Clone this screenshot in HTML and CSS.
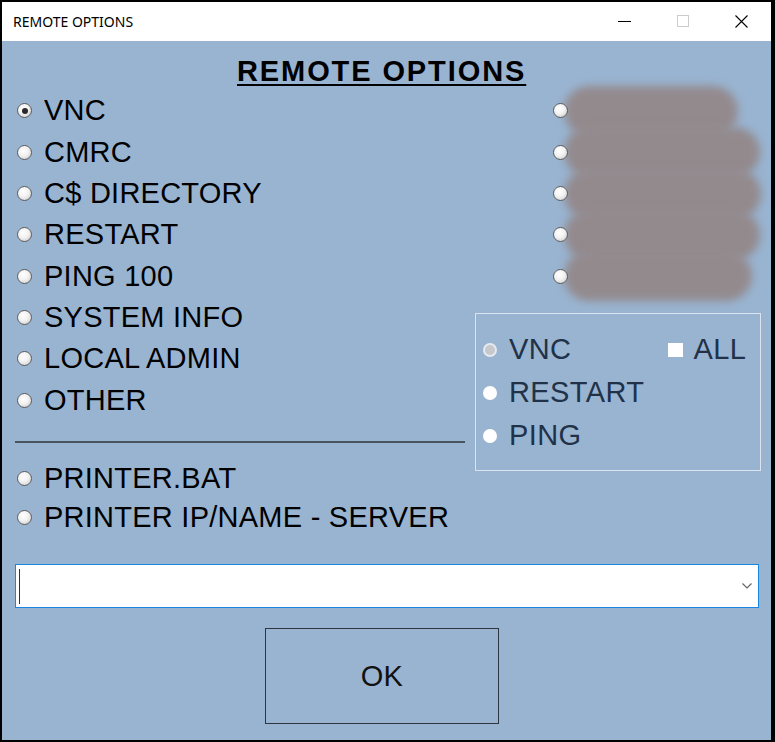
FILE: index.html
```html
<!DOCTYPE html>
<html>
<head>
<meta charset="utf-8">
<link rel="stylesheet" href="styles.css">
</head>
<body>
<div class="window">
  <div class="titlebar">
    <span class="title">REMOTE OPTIONS</span>
    <div class="caption">
      <span class="cbtn"><svg width="13" height="13" viewBox="0 0 13 13"><line x1="0" y1="6.5" x2="13" y2="6.5" stroke="#000" stroke-width="1"/></svg></span>
      <span class="cbtn"><svg width="13" height="13" viewBox="0 0 13 13"><rect x="0.5" y="0.5" width="11" height="11" fill="none" stroke="#cccccc" stroke-width="1"/></svg></span>
      <span class="cbtn"><svg width="13" height="13" viewBox="0 0 13 13"><path d="M0.5 0.5 L12.5 12.5 M12.5 0.5 L0.5 12.5" stroke="#000" stroke-width="1.1" fill="none"/></svg></span>
    </div>
  </div>
  <div class="client">
    <h1 class="heading">REMOTE OPTIONS</h1>
    <div class="main">
      <div class="left">
        <div class="opts">
          <label class="row"><span class="radio checked"></span><span class="txt">VNC</span></label>
          <label class="row"><span class="radio"></span><span class="txt">CMRC</span></label>
          <label class="row"><span class="radio"></span><span class="txt">C$ DIRECTORY</span></label>
          <label class="row"><span class="radio"></span><span class="txt">RESTART</span></label>
          <label class="row"><span class="radio"></span><span class="txt">PING 100</span></label>
          <label class="row"><span class="radio"></span><span class="txt">SYSTEM INFO</span></label>
          <label class="row"><span class="radio"></span><span class="txt">LOCAL ADMIN</span></label>
          <label class="row"><span class="radio"></span><span class="txt">OTHER</span></label>
        </div>
        <div class="sep"></div>
        <div class="printers">
          <label class="row prow"><span class="radio"></span><span class="txt">PRINTER.BAT</span></label>
          <label class="row prow"><span class="radio"></span><span class="txt">PRINTER IP/NAME - SERVER</span></label>
        </div>
      </div>
      <div class="right">
        <div class="redacted">
          <div class="rrow"><span class="radio"></span><span class="blob b1"></span></div>
          <div class="rrow"><span class="radio"></span><span class="blob b2"></span></div>
          <div class="rrow"><span class="radio"></span><span class="blob b3"></span></div>
          <div class="rrow"><span class="radio"></span><span class="blob b4"></span></div>
          <div class="rrow"><span class="radio"></span><span class="blob b5"></span></div>
        </div>
        <div class="group">
          <div class="grow">
            <span class="gradio disabled"></span><span class="gtxt">VNC</span>
            <span class="check"></span><span class="gtxt">ALL</span>
          </div>
          <div class="grow"><span class="gradio"></span><span class="gtxt">RESTART</span></div>
          <div class="grow"><span class="gradio"></span><span class="gtxt">PING</span></div>
        </div>
      </div>
    </div>
    <div class="combo">
      <span class="caret"></span>
      <svg class="chev" width="10" height="6" viewBox="0 0 10 6"><path d="M0.5 0.5 L5 5 L9.5 0.5" stroke="#666" stroke-width="1.2" fill="none"/></svg>
    </div>
    <div class="okrow"><button class="ok">OK</button></div>
  </div>
</div>
</body>
</html>
```
FILE: styles.css
```css
html, body {
  margin: 0;
  padding: 0;
  background: #000;
}
body {
  width: 775px;
  height: 742px;
  overflow: hidden;
}
.window {
  margin: 2px 4px 0 2px;
  width: 769px;
  height: 738px;
  background: #99b4d1;
  display: flex;
  flex-direction: column;
}
.titlebar {
  height: 39px;
  background: #fff;
  display: flex;
  align-items: center;
  flex-shrink: 0;
}
.title {
  font-family: "Noto Sans", sans-serif;
  font-size: 14px;
  color: #000;
  margin-left: 11px;
  margin-top: -1px;
}
.caption {
  margin-left: auto;
  display: flex;
  height: 100%;
}
.cbtn {
  width: 58.5px;
  display: flex;
  align-items: center;
  justify-content: center;
}
.cbtn svg { display: block; }
.client {
  padding: 0 10px 0 13px;
  font-family: "Liberation Sans", Arial, sans-serif;
  color: #000;
}
.heading {
  margin: 16.5px 0 5.8px 0;
  height: 27px;
  font-size: 29px;
  line-height: 27px;
  font-weight: bold;
  letter-spacing: 1.9px;
  padding-left: 222px;
  text-decoration: underline;
  text-decoration-thickness: 2px;
  text-underline-offset: 3px;
  white-space: nowrap;
}
.main {
  display: grid;
  grid-template-columns: 450px 286px;
  column-gap: 10px;
}
.row {
  display: flex;
  align-items: center;
  height: 41.3px;
  font-size: 29px;
  letter-spacing: 0.25px;
  white-space: nowrap;
}
.prow { height: 39px; }
.radio {
  width: 15px;
  height: 15px;
  box-sizing: border-box;
  border-radius: 50%;
  border: 1px solid #5e5e5e;
  background: radial-gradient(circle at 40% 35%, #ffffff 0%, #f2f2f2 45%, #c4c4c4 100%);
  margin-left: 2px;
  margin-right: 12px;
  flex-shrink: 0;
  position: relative;
  z-index: 2;
}
.radio.checked::after {
  content: "";
  position: absolute;
  left: 3.5px;
  top: 3.5px;
  width: 6px;
  height: 6px;
  border-radius: 50%;
  background: #2a2a2a;
}
.txt { display: block; }
.sep {
  height: 2px;
  background: #4a5460;
  margin: 20.5px 0 15.5px 0;
}
.redacted {
  padding-left: 78px;
}
.rrow {
  height: 41.3px;
  display: flex;
  align-items: center;
}
.rrow .radio { margin-left: 0; margin-right: 0; }
.blob {
  display: block;
  height: 50px;
  border-radius: 25px;
  background: #938a8d;
  filter: blur(4px);
  margin-left: -4px;
}
.b1 { width: 174px; }
.b2 { width: 196px; }
.b3 { width: 200px; }
.b4 { width: 196px; }
.b5 { width: 188px; }
.group {
  margin-top: 16px;
  height: 158px;
  box-sizing: border-box;
  border: 1px solid #dbe4ee;
  padding: 14.5px 0 0 7px;
}
.grow {
  height: 43px;
  display: flex;
  align-items: center;
  font-size: 29px;
  letter-spacing: 0.4px;
  color: #213248;
  white-space: nowrap;
}
.gradio {
  width: 14px;
  height: 14px;
  box-sizing: border-box;
  border-radius: 50%;
  background: #ffffff;
  margin-right: 12px;
  flex-shrink: 0;
}
.gradio.disabled {
  background: #c6c8cb;
  border: 2px solid #e6e9ee;
}
.check {
  width: 15px;
  height: 14px;
  background: #ffffff;
  margin-left: 97px;
  margin-right: 10px;
  flex-shrink: 0;
}
.combo {
  margin-top: 27.5px;
  width: 744px;
  height: 44px;
  box-sizing: border-box;
  background: #fff;
  border: 1px solid #1a86e2;
  display: flex;
  align-items: center;
  padding: 0 6px 0 3px;
}
.caret {
  width: 1px;
  height: 35px;
  background: #333;
}
.chev { margin-left: auto; display: block; }
.okrow {
  margin-top: 20px;
  padding-left: 250px;
}
.ok {
  width: 234px;
  height: 96px;
  box-sizing: border-box;
  border: 1px solid #2c3540;
  background: transparent;
  font-family: "Liberation Sans", Arial, sans-serif;
  font-size: 29px;
  letter-spacing: 0.25px;
  color: #111;
  padding: 0;
  display: block;
}
```
